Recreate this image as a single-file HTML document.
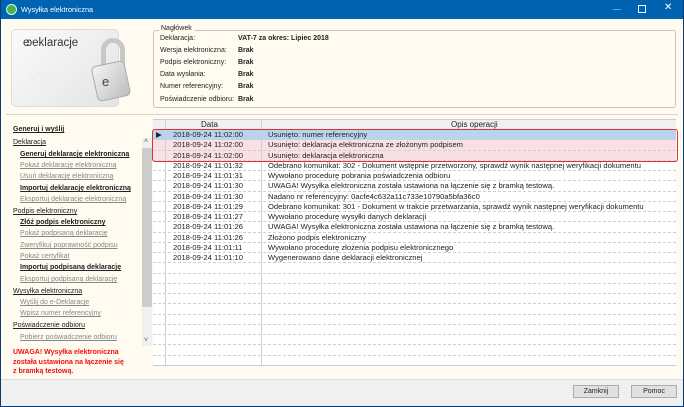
<!DOCTYPE html>
<html><head><meta charset="utf-8"><style>
*{margin:0;padding:0;box-sizing:border-box}
body{width:684px;height:407px;overflow:hidden;background:#0a3a6e;font-family:"Liberation Sans",sans-serif;font-size:7.5px;color:#222;position:relative}
.win{position:absolute;left:1px;top:0;width:682px;height:406px;background:#fffbf0}
.title{position:absolute;left:0;top:0;width:682px;height:19px;background:#0063b1;color:#fff;font-size:7.3px}
.a{position:absolute;white-space:nowrap}
.lnk{position:absolute;white-space:nowrap;text-decoration:underline;font-size:7px}
.g{color:#888}
.b{font-weight:bold}
.row{position:absolute;left:152px;width:523px;height:10.25px;border-bottom:1px dashed #d0d0d0;background:#fff}
.row span{position:absolute;top:0;line-height:10px;font-size:7.6px}
.btn{position:absolute;top:385px;height:13px;border:1px solid #adadad;background:#e1e1e1;font-size:7px;text-align:center;line-height:11px}
</style></head><body>
<div class="win">
<div class="title">
 <div class="a" style="left:5px;top:4px;width:11px;height:11px;border-radius:50%;background:#4caf50;border:1px solid #cfe"></div>
 <div class="a" style="left:20px;top:5px">Wysyłka elektroniczna</div>
 <div class="a" style="left:612px;top:9px;width:8px;height:1px;background:#6fa0d0"></div>
 <div class="a" style="left:637px;top:5px;width:8px;height:8px;border:1px solid #fff"></div>
 <div class="a" style="left:663px;top:2px;font-size:10px">✕</div>
</div>
<!-- logo -->
<div class="a" style="left:10px;top:29px;width:108px;height:78px;border-radius:5px;background:linear-gradient(135deg,#fafafa,#e4e4e4);border:1px solid #ddd"></div>
<div class="a" style="left:22px;top:37px;font-size:11.5px;color:#333">e<span style="margin-left:-3px">ↄ</span>eklaracje</div>
<div class="a" style="left:28px;top:70px;font-size:16px;color:#eee;font-weight:bold">VAT</div>
<div class="a" style="left:100px;top:38px;width:24px;height:34px;border:5px solid #c8c8c8;border-bottom:none;border-radius:12px 12px 0 0"></div>
<div class="a" style="left:93px;top:63px;width:34px;height:36px;border-radius:5px;background:linear-gradient(135deg,#f4f4f4,#bdbdbd);transform:rotate(-12deg);border:1px solid #aaa"></div>
<div class="a" style="left:101px;top:74px;font-size:13px;color:#444">e</div>
<!-- header fieldset -->
<div class="a" style="left:152px;top:30px;width:523px;height:78px;border:1px solid #c9c4b8;border-radius:3px"></div>
<div class="a" style="left:158px;top:25px;background:#fffbf0;padding:0 2px;font-size:7px">Nagłówek</div>
<div class="a" style="left:159px;top:35px;font-size:7px">Deklaracja:</div><div class="a b" style="left:237px;top:35px;font-size:7px">VAT-7 za okres: Lipiec 2018</div>
<div class="a" style="left:159px;top:47px;font-size:7px">Wersja elektroniczna:</div><div class="a b" style="left:237px;top:47px;font-size:7px">Brak</div>
<div class="a" style="left:159px;top:59px;font-size:7px">Podpis elektroniczny:</div><div class="a b" style="left:237px;top:59px;font-size:7px">Brak</div>
<div class="a" style="left:159px;top:71px;font-size:7px">Data wysłania:</div><div class="a b" style="left:237px;top:71px;font-size:7px">Brak</div>
<div class="a" style="left:159px;top:83px;font-size:7px">Numer referencyjny:</div><div class="a b" style="left:237px;top:83px;font-size:7px">Brak</div>
<div class="a" style="left:159px;top:96px;font-size:7px">Poświadczenie odbioru:</div><div class="a b" style="left:237px;top:96px;font-size:7px">Brak</div>
<div class="a" style="left:5px;top:114px;width:672px;height:1px;background:#d8d4cc"></div>
<!-- left nav -->
<div class="lnk b" style="left:12px;top:126px">Generuj i wyślij</div>
<div class="lnk" style="left:12px;top:139px">Deklaracja</div>
<div class="lnk b" style="left:19px;top:151px">Generuj deklarację elektroniczną</div>
<div class="lnk g" style="left:19px;top:162px">Pokaż deklarację elektroniczną</div>
<div class="lnk g" style="left:19px;top:173px">Usuń deklarację elektroniczną</div>
<div class="lnk b" style="left:19px;top:185px">Importuj deklarację elektroniczną</div>
<div class="lnk g" style="left:19px;top:196px">Eksportuj deklarację elektroniczną</div>
<div class="lnk" style="left:12px;top:208px">Podpis elektroniczny</div>
<div class="lnk b" style="left:19px;top:219px">Złóż podpis elektroniczny</div>
<div class="lnk g" style="left:19px;top:230px">Pokaż podpisaną deklarację</div>
<div class="lnk g" style="left:19px;top:242px">Zweryfikuj poprawność podpisu</div>
<div class="lnk g" style="left:19px;top:253px">Pokaż certyfikat</div>
<div class="lnk b" style="left:19px;top:264px">Importuj podpisaną deklarację</div>
<div class="lnk g" style="left:19px;top:276px">Eksportuj podpisaną deklarację</div>
<div class="lnk" style="left:12px;top:288px">Wysyłka elektroniczna</div>
<div class="lnk g" style="left:19px;top:299px">Wyślij do e-Deklaracje</div>
<div class="lnk g" style="left:19px;top:310px">Wpisz numer referencyjny</div>
<div class="lnk" style="left:12px;top:322px">Poświadczenie odbioru</div>
<div class="lnk g" style="left:19px;top:334px">Pobierz poświadczenie odbioru</div>
<div class="a b" style="left:12px;top:348px;color:#f01010;font-size:7px;line-height:9.7px">UWAGA! Wysyłka elektroniczna<br>została ustawiona na łączenie się<br>z bramką testową.</div>
<!-- scrollbar -->
<div class="a" style="left:141px;top:138px;width:10px;height:208px;background:#f0f0f0"></div>
<div class="a" style="left:141px;top:148px;width:10px;height:159px;background:#cdcdcd"></div>
<div class="a" style="left:143px;top:138px;font-size:7px;color:#555">˄</div>
<div class="a" style="left:143px;top:337px;font-size:7px;color:#555">˅</div>
<!-- grid -->
<div class="a" style="left:152px;top:119px;width:523px;height:247px;background:#fff;border:1px solid #ccc"></div>
<div class="a" style="left:152px;top:120px;width:523px;height:10px;background:#f0f0f0;border-bottom:1px solid #c8c8c8"></div>
<div class="a" style="left:200px;top:120px;font-size:8px;line-height:10px">Data</div>
<div class="a" style="left:450px;top:120px;font-size:8px;line-height:10px">Opis operacji</div>
<div class="row" style="top:130px;background:#b8d4ef"><span style="left:3px">▶</span><span style="left:20px">2018-09-24 11:02:00</span><span style="left:115px">Usunięto: numer referencyjny</span></div>
<div class="row" style="top:140.25px;background:#f8e0e4"><span style="left:20px">2018-09-24 11:02:00</span><span style="left:115px">Usunięto: deklaracja elektroniczna ze złożonym podpisem</span></div>
<div class="row" style="top:150.5px;background:#f8e0e4"><span style="left:20px">2018-09-24 11:02:00</span><span style="left:115px">Usunięto: deklaracja elektroniczna</span></div>
<div class="row" style="top:160.75px"><span style="left:20px">2018-09-24 11:01:32</span><span style="left:115px">Odebrano komunikat: 302 - Dokument wstępnie przetworzony, sprawdź wynik następnej weryfikacji dokumentu</span></div>
<div class="row" style="top:171px"><span style="left:20px">2018-09-24 11:01:31</span><span style="left:115px">Wywołano procedurę pobrania poświadczenia odbioru</span></div>
<div class="row" style="top:181.25px"><span style="left:20px">2018-09-24 11:01:30</span><span style="left:115px">UWAGA! Wysyłka elektroniczna została ustawiona na łączenie się z bramką testową.</span></div>
<div class="row" style="top:191.5px"><span style="left:20px">2018-09-24 11:01:30</span><span style="left:115px">Nadano nr referencyjny: 0acfe4c632a11c733e10790a5bfa36c0</span></div>
<div class="row" style="top:201.75px"><span style="left:20px">2018-09-24 11:01:29</span><span style="left:115px">Odebrano komunikat: 301 - Dokument w trakcie przetwarzania, sprawdź wynik następnej weryfikacji dokumentu</span></div>
<div class="row" style="top:212px"><span style="left:20px">2018-09-24 11:01:27</span><span style="left:115px">Wywołano procedurę wysyłki danych deklaracji</span></div>
<div class="row" style="top:222.25px"><span style="left:20px">2018-09-24 11:01:26</span><span style="left:115px">UWAGA! Wysyłka elektroniczna została ustawiona na łączenie się z bramką testową.</span></div>
<div class="row" style="top:232.5px"><span style="left:20px">2018-09-24 11:01:26</span><span style="left:115px">Złożono podpis elektroniczny</span></div>
<div class="row" style="top:242.75px"><span style="left:20px">2018-09-24 11:01:11</span><span style="left:115px">Wywołano procedurę złożenia podpisu elektronicznego</span></div>
<div class="row" style="top:253px"><span style="left:20px">2018-09-24 11:01:10</span><span style="left:115px">Wygenerowano dane deklaracji elektronicznej</span></div>
<div class="row" style="top:263.25px"></div><div class="row" style="top:273.5px"></div><div class="row" style="top:283.75px"></div><div class="row" style="top:294px"></div><div class="row" style="top:304.25px"></div><div class="row" style="top:314.5px"></div><div class="row" style="top:324.75px"></div><div class="row" style="top:335px"></div><div class="row" style="top:345.25px"></div><div class="row" style="top:355.5px;height:9px;border-bottom:none"></div>
<div class="a" style="left:164px;top:120px;width:1px;height:245px;background:#d0d0d0"></div>
<div class="a" style="left:260px;top:120px;width:1px;height:245px;background:#d0d0d0"></div>
<div class="a" style="left:151px;top:129px;width:526px;height:33px;border:1px solid #e03030;border-radius:3px"></div>
<!-- bottom -->
<div class="a" style="left:0;top:379px;width:682px;height:27px;background:#f0f0f0;border-top:1px solid #ddd"></div>
<div class="btn" style="left:572px;width:46px">Zamknij</div>
<div class="btn" style="left:630px;width:46px">Pomoc</div>
</div>
</body></html>
